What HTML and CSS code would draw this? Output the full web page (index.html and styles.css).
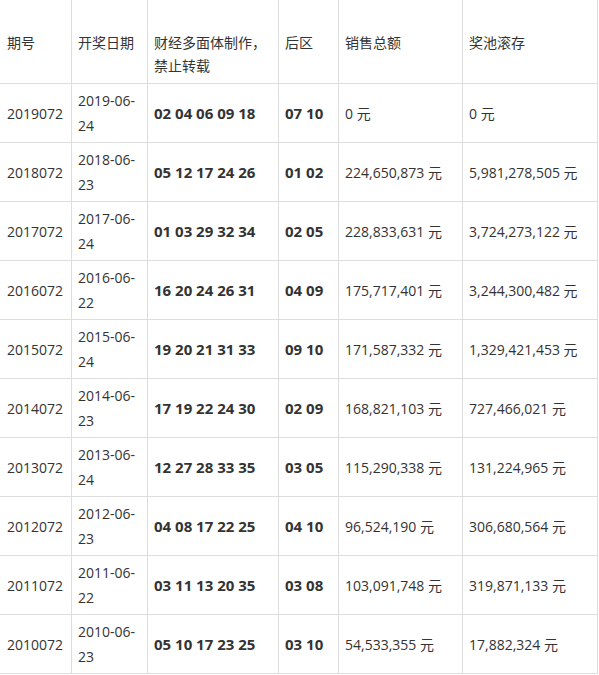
FILE: index.html
```html
<!DOCTYPE html>
<html lang="zh-CN">
<head>
<meta charset="utf-8">
<title>大乐透历史开奖</title>
<link rel="stylesheet" href="styles.css">
</head>
<body>
<table class="draws">
  <thead>
    <tr>
      <th class="c1">期号</th>
      <th class="c2">开奖日期</th>
      <th class="c3">财经多面体制作，禁止转载</th>
      <th class="c4">后区</th>
      <th class="c5">销售总额</th>
      <th class="c6">奖池滚存</th>
    </tr>
  </thead>
  <tbody>
    <tr><td class="c1">2019072</td><td class="c2">2019-06-24</td><td class="c3 num">02 04 06 09 18</td><td class="c4 num">07 10</td><td class="c5">0 元</td><td class="c6">0 元</td></tr>
    <tr><td class="c1">2018072</td><td class="c2">2018-06-23</td><td class="c3 num">05 12 17 24 26</td><td class="c4 num">01 02</td><td class="c5">224,650,873 元</td><td class="c6">5,981,278,505 元</td></tr>
    <tr><td class="c1">2017072</td><td class="c2">2017-06-24</td><td class="c3 num">01 03 29 32 34</td><td class="c4 num">02 05</td><td class="c5">228,833,631 元</td><td class="c6">3,724,273,122 元</td></tr>
    <tr><td class="c1">2016072</td><td class="c2">2016-06-22</td><td class="c3 num">16 20 24 26 31</td><td class="c4 num">04 09</td><td class="c5">175,717,401 元</td><td class="c6">3,244,300,482 元</td></tr>
    <tr><td class="c1">2015072</td><td class="c2">2015-06-24</td><td class="c3 num">19 20 21 31 33</td><td class="c4 num">09 10</td><td class="c5">171,587,332 元</td><td class="c6">1,329,421,453 元</td></tr>
    <tr><td class="c1">2014072</td><td class="c2">2014-06-23</td><td class="c3 num">17 19 22 24 30</td><td class="c4 num">02 09</td><td class="c5">168,821,103 元</td><td class="c6">727,466,021 元</td></tr>
    <tr><td class="c1">2013072</td><td class="c2">2013-06-24</td><td class="c3 num">12 27 28 33 35</td><td class="c4 num">03 05</td><td class="c5">115,290,338 元</td><td class="c6">131,224,965 元</td></tr>
    <tr><td class="c1">2012072</td><td class="c2">2012-06-23</td><td class="c3 num">04 08 17 22 25</td><td class="c4 num">04 10</td><td class="c5">96,524,190 元</td><td class="c6">306,680,564 元</td></tr>
    <tr><td class="c1">2011072</td><td class="c2">2011-06-22</td><td class="c3 num">03 11 13 20 35</td><td class="c4 num">03 08</td><td class="c5">103,091,748 元</td><td class="c6">319,871,133 元</td></tr>
    <tr><td class="c1">2010072</td><td class="c2">2010-06-23</td><td class="c3 num">05 10 17 23 25</td><td class="c4 num">03 10</td><td class="c5">54,533,355 元</td><td class="c6">17,882,324 元</td></tr>
  </tbody>
</table>
</body>
</html>
```
FILE: styles.css
```css
html, body {
  margin: 0;
  padding: 0;
  background: #fff;
}

body {
  font-family: "Open Sans", "Noto Sans CJK SC", sans-serif;
  font-size: 14px;
  color: #333;
}

.draws {
  border-collapse: separate;
  border-spacing: 0;
  table-layout: fixed;
  width: 598px;
}

.draws th,
.draws td {
  box-sizing: border-box;
  border-right: 1px solid #ddd;
  border-bottom: 1px solid #ddd;
  text-align: left;
  font-weight: 400;
  padding-left: 6px;
  padding-right: 6px;
  word-break: break-all;
}

.draws th {
  vertical-align: top;
  line-height: 23px;
  padding-top: 31px;
  padding-bottom: 6px;
  height: 84px;
}

.draws td {
  vertical-align: middle;
  line-height: 25px;
  padding-top: 4px;
  padding-bottom: 4px;
  height: 59px;
}

.draws .c1 { width: 72px; padding-left: 7px; }
.draws .c2 { width: 76px; }
.draws .c3 { width: 131px; }
.draws .c4 { width: 60px; }
.draws .c5 { width: 124px; }
.draws .c6 { width: 135px; }

.draws td.num {
  font-weight: 700;
  font-size: 15px;
  color: #333;
}
```
